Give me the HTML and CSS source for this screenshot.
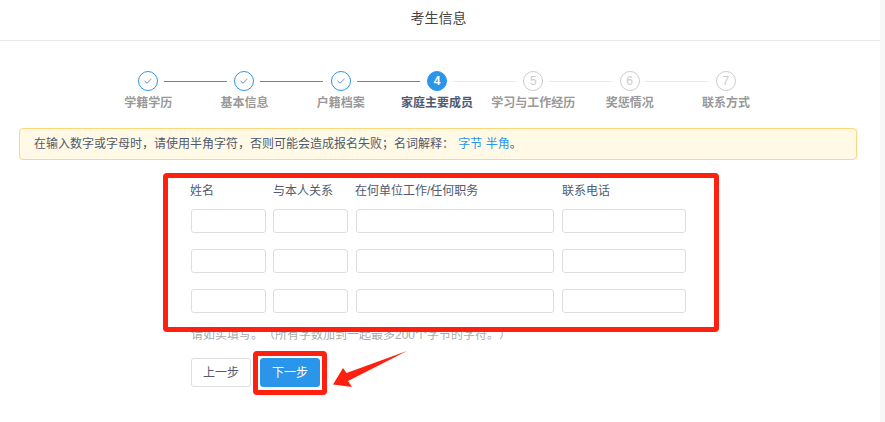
FILE: index.html
```html
<!DOCTYPE html>
<html lang="zh">
<head>
<meta charset="utf-8">
<title>考生信息</title>
<link rel="stylesheet" href="styles.css">
</head>
<body>
<div class="page">
  <header class="head">考生信息</header>
  <ol class="steps">
    <li class="step done"><span class="dot"><svg width="10" height="10" viewBox="0 0 10 10"><path d="M1.5 5 L4 7.2 L8.5 2.8" fill="none" stroke="#6f8fe6" stroke-width="1"/></svg></span><span class="name">学籍学历</span></li>
    <li class="step done"><span class="dot"><svg width="10" height="10" viewBox="0 0 10 10"><path d="M1.5 5 L4 7.2 L8.5 2.8" fill="none" stroke="#6f8fe6" stroke-width="1"/></svg></span><span class="name">基本信息</span></li>
    <li class="step done"><span class="dot"><svg width="10" height="10" viewBox="0 0 10 10"><path d="M1.5 5 L4 7.2 L8.5 2.8" fill="none" stroke="#6f8fe6" stroke-width="1"/></svg></span><span class="name">户籍档案</span></li>
    <li class="step now"><span class="dot">4</span><span class="name">家庭主要成员</span></li>
    <li class="step"><span class="dot">5</span><span class="name">学习与工作经历</span></li>
    <li class="step"><span class="dot">6</span><span class="name">奖惩情况</span></li>
    <li class="step last"><span class="dot">7</span><span class="name">联系方式</span></li>
  </ol>
  <div class="alert">在输入数字或字母时，请使用半角字符，否则可能会造成报名失败；名词解释： <a class="link">字节</a> <a class="link">半角</a>。</div>
  <form class="form">
    <div class="row labels"><span>姓名</span><span>与本人关系</span><span>在何单位工作/任何职务</span><span>联系电话</span></div>
    <div class="row"><input><input><input><input></div>
    <div class="row"><input><input><input><input></div>
    <div class="row"><input><input><input><input></div>
    <p class="hint">请如实填写。（所有字数加到一起最多200个字节的字符。）</p>
    <div class="actions"><button type="button" class="btn">上一步</button><button type="button" class="btn primary">下一步</button></div>
  </form>
</div>
<div class="mark mark-table"></div>
<div class="mark mark-next"></div>
<svg class="arrow" width="80" height="40" viewBox="0 0 80 40"><polygon fill="#ff2010" points="3,34.5 13,18 16.5,23 77,1 18,31 22,37"/></svg>
</body>
</html>
```
FILE: styles.css
```css
* { box-sizing: border-box; }
html, body { margin: 0; height: 422px; overflow: hidden; background: #f7f7f7; }
body { font: 12px/1.5 "Liberation Sans", "Noto Sans CJK SC", sans-serif; color: #515a6e; position: relative; text-spacing-trim: space-all; }
.page { width: 880px; height: 422px; background: #fff; }
.head { height: 41px; border-bottom: 1px solid #e8eaec; padding-right: 3px; text-align: center; font-size: 14px; line-height: 36px; color: #444; }
.steps { list-style: none; margin: 0; padding: 30px 0 0 100px; display: flex; height: 87px; }
.step { width: 96.3px; display: flex; flex-direction: column; align-items: center; position: relative; color: #999; font-weight: 700; }
.step::after { content: ""; position: absolute; left: 64px; top: 10px; width: 63px; height: 1px; background: #e8eaec; }
.step.done::after { background: #2b95ea; }
.step.last::after { display: none; }
.dot { width: 20px; height: 20px; border-radius: 50%; border: 1px solid #ccc; color: #ccc; display: flex; align-items: center; justify-content: center; font-size: 12px; font-weight: 400; line-height: 1; background: #fff; }
.done .dot { border-color: #2b95ea; }
.now .dot { background: #2b95ea; border-color: #2b95ea; color: #fff; font-weight: 700; }
.name { margin-top: 3px; white-space: nowrap; line-height: 18px; }
.now .name { color: #515a6e; }
.alert { margin: 0 23px 0 19px; height: 32px; border: 1px solid #ffd77a; border-radius: 4px; background: #fff9e6; padding-left: 14px; line-height: 30px; }
.link { color: #2b95ea; margin-left: 1px; }
.link + .link { margin-left: 0; }
.form { margin-left: 191px; padding-top: 20px; }
.row { display: flex; gap: 7px; height: 40px; }
.labels { height: 29px; line-height: 22px; color: #515a6e; margin-left: -1px; }
.row > :nth-child(1), .row > :nth-child(2) { width: 75px; }
.labels > :nth-child(1) { margin-right: 1px; }
.row > :nth-child(2) { margin-right: 1px; }
.labels > :nth-child(2) { margin-right: 0; }
.row > :nth-child(3) { width: 198px; margin-right: 1px; }
.labels > :nth-child(3) { margin-right: 2px; }
.row > :nth-child(4) { width: 124px; }
.row input { height: 24px; border: 1px solid #dcdee2; border-radius: 3px; background: #fff; padding: 0; }
.hint { margin: -4px 0 0; color: #aaa; line-height: 20px; }
.actions { display: flex; gap: 9px; margin-top: 13px; }
.btn { width: 60px; height: 29px; border: 1px solid #dcdee2; border-radius: 3px; background: #fff; color: #515a6e; font: inherit; padding: 0; }
.btn.primary { background: #2b95ea; border-color: #2b95ea; color: #fff; }
.mark { position: absolute; border: 5px solid #ff2010; border-radius: 4px; }
.mark-table { left: 163px; top: 173px; width: 556px; height: 159px; }
.mark-next { left: 253px; top: 351px; width: 74px; height: 44px; }
.arrow { position: absolute; left: 330px; top: 350px; }
```
